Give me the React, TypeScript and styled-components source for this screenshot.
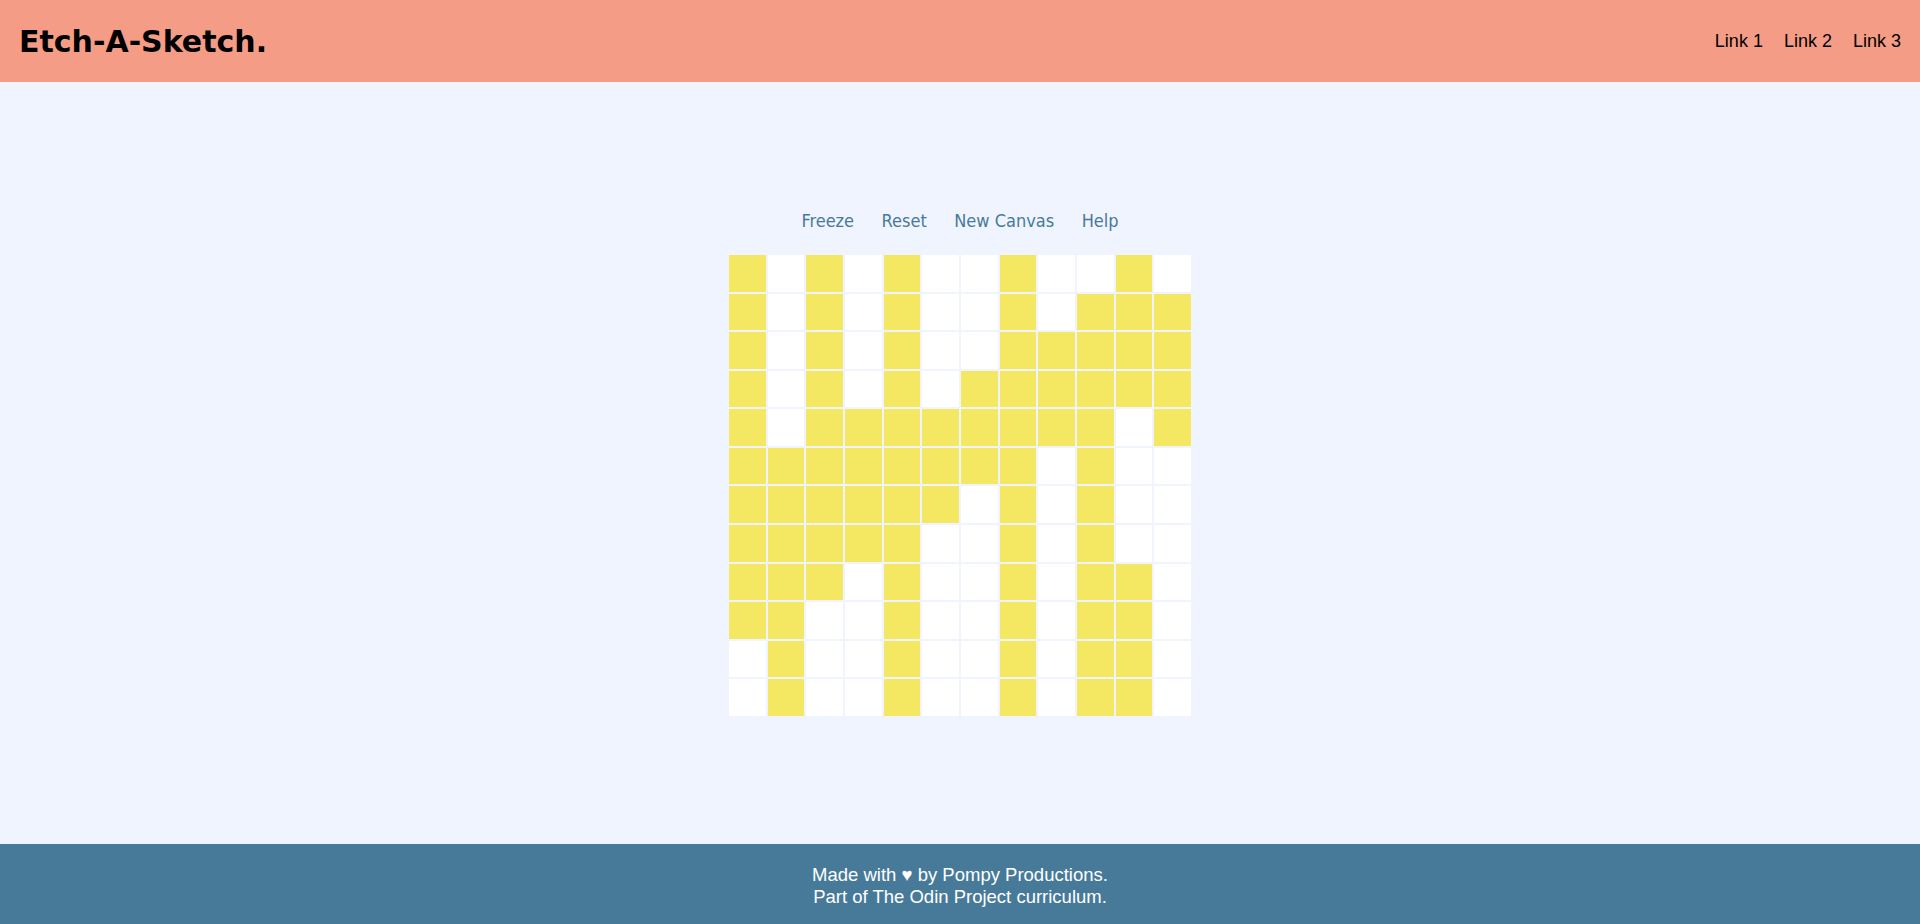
import React from "react";
import styled, { createGlobalStyle } from "styled-components";

const GlobalStyle = createGlobalStyle`
  html, body {
    margin: 0;
    padding: 0;
  }
  body {
    font-family: "Liberation Sans", Arial, sans-serif;
    background: #f0f4fe;
  }
  * { box-sizing: border-box; }
`;

const Page = styled.div`
  min-height: 100vh;
  display: flex;
  flex-direction: column;
`;

const Header = styled.header`
  height: 82px;
  background: #f49c85;
  display: flex;
  align-items: center;
  justify-content: space-between;
  padding: 0 19px 0 19px;
`;

const Logo = styled.h1`
  margin: 0;
  font-family: "DejaVu Sans", Verdana, sans-serif;
  font-weight: 700;
  font-size: 30px;
  color: #000;
`;

const LinkList = styled.nav`
  display: flex;
  gap: 21px;
`;

const HeaderLink = styled.a`
  font-family: "Liberation Sans", Arial, sans-serif;
  font-size: 18px;
  color: #000;
  text-decoration: none;
`;

const Main = styled.main`
  flex: 1;
  display: flex;
  flex-direction: column;
  align-items: center;
  justify-content: center;
`;

const Controls = styled.div`
  display: flex;
  gap: 27.5px;
  margin-bottom: 23px;
`;

const ControlButton = styled.button`
  border: none;
  background: none;
  padding: 0;
  font-family: "DejaVu Sans Condensed", "Noto Sans", sans-serif;
  font-size: 18px;
  line-height: 22px;
  color: #477a99;
  cursor: pointer;
`;

const Grid = styled.div`
  width: 462px;
  height: 461px;
  display: grid;
  grid-template-columns: repeat(12, 1fr);
  grid-template-rows: repeat(12, 1fr);
  gap: 2px;
`;

const Cell = styled.div<{ $on: boolean }>`
  background: ${(p) => (p.$on ? "#f4e862" : "#ffffff")};
`;

const Footer = styled.footer`
  height: 80px;
  background: #477a99;
  color: #ffffff;
  display: flex;
  flex-direction: column;
  align-items: center;
  justify-content: center;
  padding-top: 3px;
  font-family: "Liberation Sans", Arial, sans-serif;
  font-size: 18.5px;
  line-height: 22px;
`;

const pattern = [
  "Y.Y.Y..Y..Y.",
  "Y.Y.Y..Y.YYY",
  "Y.Y.Y..YYYYY",
  "Y.Y.Y.YYYYYY",
  "Y.YYYYYYYY.Y",
  "YYYYYYYY.Y..",
  "YYYYYY.Y.Y..",
  "YYYYY..Y.Y..",
  "YYY.Y..Y.YY.",
  "YY..Y..Y.YY.",
  ".Y..Y..Y.YY.",
  ".Y..Y..Y.YY.",
];

export default function App() {
  return (
    <Page>
      <GlobalStyle />
      <Header>
        <Logo>Etch-A-Sketch.</Logo>
        <LinkList>
          <HeaderLink href="#">Link 1</HeaderLink>
          <HeaderLink href="#">Link 2</HeaderLink>
          <HeaderLink href="#">Link 3</HeaderLink>
        </LinkList>
      </Header>
      <Main>
        <Controls>
          <ControlButton>Freeze</ControlButton>
          <ControlButton>Reset</ControlButton>
          <ControlButton>New Canvas</ControlButton>
          <ControlButton>Help</ControlButton>
        </Controls>
        <Grid>
          {pattern.flatMap((row, r) =>
            row.split("").map((c, i) => <Cell key={`${r}-${i}`} $on={c === "Y"} />)
          )}
        </Grid>
      </Main>
      <Footer>
        <div>Made with ♥ by Pompy Productions.</div>
        <div>Part of The Odin Project curriculum.</div>
      </Footer>
    </Page>
  );
}
